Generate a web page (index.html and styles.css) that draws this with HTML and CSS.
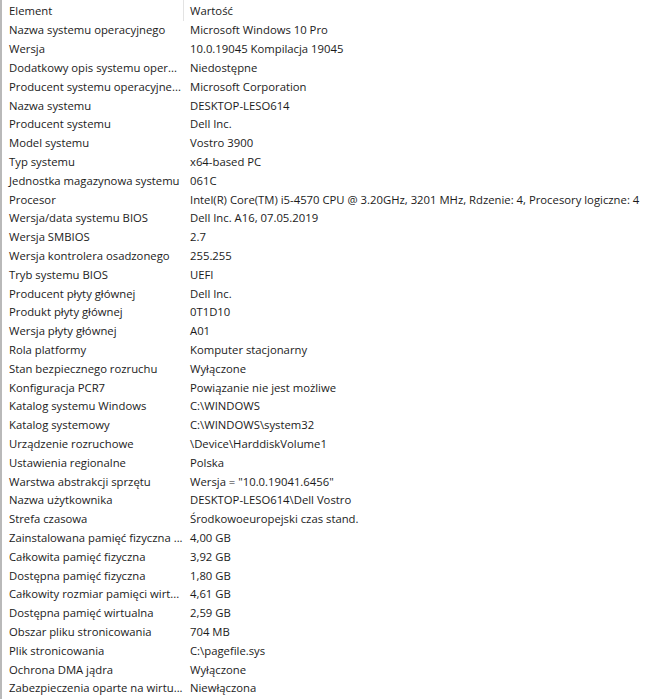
FILE: index.html
```html
<!DOCTYPE html>
<html lang="pl">
<head>
<meta charset="utf-8">
<title>Informacje o systemie</title>
<link rel="stylesheet" href="styles.css">
</head>
<body>
<div class="list">
  <div class="head">
    <div class="hcell c1">Element</div>
    <div class="hcell c2">Wartość</div>
  </div>
  <div class="rows">
    <div class="c1">Nazwa systemu operacyjnego</div><div class="c2">Microsoft Windows 10 Pro</div>
    <div class="c1">Wersja</div><div class="c2">10.0.19045 Kompilacja 19045</div>
    <div class="c1">Dodatkowy opis systemu oper...</div><div class="c2">Niedostępne</div>
    <div class="c1">Producent systemu operacyjne...</div><div class="c2">Microsoft Corporation</div>
    <div class="c1">Nazwa systemu</div><div class="c2">DESKTOP-LESO614</div>
    <div class="c1">Producent systemu</div><div class="c2">Dell Inc.</div>
    <div class="c1">Model systemu</div><div class="c2">Vostro 3900</div>
    <div class="c1">Typ systemu</div><div class="c2">x64-based PC</div>
    <div class="c1">Jednostka magazynowa systemu</div><div class="c2">061C</div>
    <div class="c1">Procesor</div><div class="c2">Intel(R) Core(TM) i5-4570 CPU @ 3.20GHz, 3201 MHz, Rdzenie: 4, Procesory logiczne: 4</div>
    <div class="c1">Wersja/data systemu BIOS</div><div class="c2">Dell Inc. A16, 07.05.2019</div>
    <div class="c1">Wersja SMBIOS</div><div class="c2">2.7</div>
    <div class="c1">Wersja kontrolera osadzonego</div><div class="c2">255.255</div>
    <div class="c1">Tryb systemu BIOS</div><div class="c2">UEFI</div>
    <div class="c1">Producent płyty głównej</div><div class="c2">Dell Inc.</div>
    <div class="c1">Produkt płyty głównej</div><div class="c2">0T1D10</div>
    <div class="c1">Wersja płyty głównej</div><div class="c2">A01</div>
    <div class="c1">Rola platformy</div><div class="c2">Komputer stacjonarny</div>
    <div class="c1">Stan bezpiecznego rozruchu</div><div class="c2">Wyłączone</div>
    <div class="c1">Konfiguracja PCR7</div><div class="c2">Powiązanie nie jest możliwe</div>
    <div class="c1">Katalog systemu Windows</div><div class="c2">C:\WINDOWS</div>
    <div class="c1">Katalog systemowy</div><div class="c2">C:\WINDOWS\system32</div>
    <div class="c1">Urządzenie rozruchowe</div><div class="c2">\Device\HarddiskVolume1</div>
    <div class="c1">Ustawienia regionalne</div><div class="c2">Polska</div>
    <div class="c1">Warstwa abstrakcji sprzętu</div><div class="c2">Wersja = "10.0.19041.6456"</div>
    <div class="c1">Nazwa użytkownika</div><div class="c2">DESKTOP-LESO614\Dell Vostro</div>
    <div class="c1">Strefa czasowa</div><div class="c2">Środkowoeuropejski czas stand.</div>
    <div class="c1">Zainstalowana pamięć fizyczna ...</div><div class="c2">4,00 GB</div>
    <div class="c1">Całkowita pamięć fizyczna</div><div class="c2">3,92 GB</div>
    <div class="c1">Dostępna pamięć fizyczna</div><div class="c2">1,80 GB</div>
    <div class="c1">Całkowity rozmiar pamięci wirt...</div><div class="c2">4,61 GB</div>
    <div class="c1">Dostępna pamięć wirtualna</div><div class="c2">2,59 GB</div>
    <div class="c1">Obszar pliku stronicowania</div><div class="c2">704 MB</div>
    <div class="c1">Plik stronicowania</div><div class="c2">C:\pagefile.sys</div>
    <div class="c1">Ochrona DMA jądra</div><div class="c2">Wyłączone</div>
    <div class="c1">Zabezpieczenia oparte na wirtu...</div><div class="c2">Niewłączona</div>
  </div>
</div>
</body>
</html>
```
FILE: styles.css
```css
html, body {
  margin: 0;
  padding: 0;
  background: #ffffff;
}

.list {
  height: 699px;
  border-left: 2px solid #b9b9b9;
  font-family: "Open Sans", "Noto Sans", sans-serif;
  font-size: 11.3px;
  color: #1b1b1b;
  overflow: hidden;
}

.head {
  display: grid;
  grid-template-columns: 181px 1fr;
  height: 20.6px;
  align-items: center;
}

.head .c2 {
  border-left: 1px solid #e3e3e3;
  height: 100%;
  display: flex;
  align-items: center;
}

.rows {
  display: grid;
  grid-template-columns: 181px 1fr;
  grid-auto-rows: 18.8px;
  align-items: center;
}

.c1 {
  padding-left: 7px;
  white-space: nowrap;
}

.c2 {
  padding-left: 6px;
  white-space: nowrap;
}

.rows .c2 {
  padding-left: 7px;
}
```
